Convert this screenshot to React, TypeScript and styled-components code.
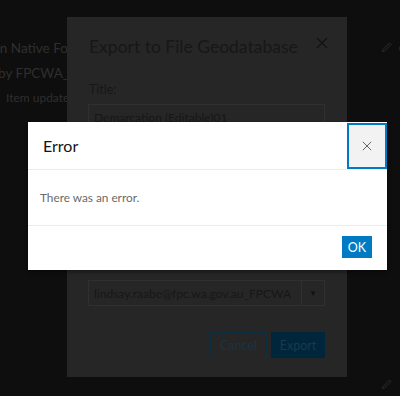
import styled, { createGlobalStyle } from 'styled-components';

const GlobalStyle = createGlobalStyle`
  html, body {
    margin: 0;
    padding: 0;
    background: #0e0e0e;
  }
  body {
    font-family: Lato, "Noto Sans", sans-serif;
  }
`;

const Pencil = ({ size = 12 }: { size?: number }) => (
  <svg width={size} height={size} viewBox="0 0 12 12" fill="none">
    <path d="M1.5 10.5 L2 8.5 L8.5 2 L10 3.5 L3.5 10 Z" stroke="#2c2c2c" strokeWidth="1" />
  </svg>
);

const Cross = ({ size = 12, color }: { size?: number; color: string }) => (
  <svg width={size} height={size} viewBox="0 0 12 12">
    <path d="M1 1 L11 11 M11 1 L1 11" stroke={color} strokeWidth="1.1" />
  </svg>
);

const App = () => {
  return (
    <>
      <GlobalStyle />
      <Page>
        {/* page behind both dialogs */}
        <ItemInfo>
          <InfoLine $indent={0}>Demarcation Native Forest</InfoLine>
          <InfoLine $indent={20}>Owned by FPCWA_GIS</InfoLine>
          <InfoSmall>Item updated</InfoSmall>
        </ItemInfo>
        <SideTools>
          <ToolRow>
            <Pencil />
            <ToolText>edit</ToolText>
          </ToolRow>
          <ToolRow>
            <Pencil />
          </ToolRow>
        </SideTools>

        {/* export dialog, dimmed */}
        <ExportPanel>
          <ExportHeader>
            <ExportTitle>Export to File Geodatabase</ExportTitle>
            <Cross size={12} color="#111" />
          </ExportHeader>
          <FieldLabel>Title:</FieldLabel>
          <TextBox>Demarcation (Editable)01</TextBox>
          <Spacer />
          <SelectBox>
            <SelectText>lindsay.raabe@fpc.wa.gov.au_FPCWA</SelectText>
            <SelectArrow>▼</SelectArrow>
          </SelectBox>
          <ExportFooter>
            <DimButton $primary={false} $w={57}>Cancel</DimButton>
            <DimButton $primary $w={54}>Export</DimButton>
          </ExportFooter>
        </ExportPanel>

        {/* error modal */}
        <ErrorModal>
          <ErrorHeader>
            <ErrorTitle>Error</ErrorTitle>
            <CloseButton>
              <Cross size={10} color="#555" />
            </CloseButton>
          </ErrorHeader>
          <ErrorBody>There was an error.</ErrorBody>
          <ErrorFooter>
            <OkButton>OK</OkButton>
          </ErrorFooter>
        </ErrorModal>
      </Page>
    </>
  );
};

export default App;

const Page = styled.div`
  position: relative;
  width: 400px;
  height: 396px;
  overflow: hidden;
  background: #0e0e0e;
  display: flex;
  justify-content: space-between;
`;

const ItemInfo = styled.div`
  margin-left: -69px;
  padding-top: 38px;
  display: flex;
  flex-direction: column;
  gap: 4px;
  color: #2e2e2e;
`;

const InfoLine = styled.div<{ $indent: number }>`
  font-size: 13.5px;
  line-height: 21px;
  white-space: nowrap;
  margin-left: ${(p) => p.$indent}px;
`;

const InfoSmall = styled.div`
  font-size: 12px;
  line-height: 20px;
  padding-left: 75px;
  white-space: nowrap;
`;

const SideTools = styled.div`
  display: flex;
  flex-direction: column;
  justify-content: space-between;
  padding: 38px 0 6px;
  margin-right: -22px;
`;

const ToolRow = styled.div`
  display: flex;
  align-items: center;
  gap: 5px;
`;

const ToolText = styled.span`
  font-size: 14px;
  color: #2a2a2a;
`;

const ExportPanel = styled.div`
  position: absolute;
  left: 67px;
  top: 17px;
  width: 280px;
  height: 360px;
  background: #262626;
  box-sizing: border-box;
  padding: 0 22px 0 21px;
  display: flex;
  flex-direction: column;
`;

const ExportHeader = styled.div`
  display: flex;
  align-items: center;
  justify-content: space-between;
  height: 58px;
  svg {
    margin-right: -3px;
    margin-top: -6px;
  }
`;

const ExportTitle = styled.div`
  font-size: 17.5px;
  color: #171717;
  padding-left: 1px;
  white-space: nowrap;
`;

const FieldLabel = styled.div`
  font-size: 12.5px;
  color: #171717;
  margin-top: 7px;
  padding-left: 1px;
`;

const TextBox = styled.div`
  margin-top: 7px;
  height: 27px;
  box-sizing: border-box;
  border: 1px solid #303030;
  padding: 0 5px;
  display: flex;
  align-items: center;
  font-size: 12px;
  color: #171717;
`;

const Spacer = styled.div`
  flex: 0 0 149px;
`;

const SelectBox = styled.div`
  height: 26px;
  box-sizing: border-box;
  border: 1px solid #303030;
  display: flex;
  align-items: stretch;
`;

const SelectText = styled.div`
  flex: 1;
  min-width: 0;
  display: flex;
  align-items: center;
  padding-left: 5px;
  font-size: 12px;
  color: #171717;
  white-space: nowrap;
  overflow: hidden;
`;

const SelectArrow = styled.div`
  width: 22px;
  border-left: 1px solid #303030;
  display: flex;
  align-items: center;
  justify-content: center;
  font-size: 8px;
  color: #111;
`;

const ExportFooter = styled.div`
  display: flex;
  justify-content: flex-end;
  gap: 4px;
  margin-top: 26px;
`;

const DimButton = styled.div<{ $primary: boolean; $w: number }>`
  width: ${(p) => p.$w}px;
  height: 26px;
  box-sizing: border-box;
  display: flex;
  align-items: center;
  justify-content: center;
  font-size: 12.5px;
  border: 1px solid ${(p) => (p.$primary ? '#00263b' : '#0d2f42')};
  background: ${(p) => (p.$primary ? '#00263b' : 'transparent')};
  color: ${(p) => (p.$primary ? '#1a3a4c' : '#1b3342')};
`;

const ErrorModal = styled.div`
  position: absolute;
  left: 28px;
  top: 122px;
  width: 359px;
  height: 148px;
  background: #fff;
  display: flex;
  flex-direction: column;
  box-shadow: 0 2px 4px rgba(0, 0, 0, 0.4);
`;

const ErrorHeader = styled.div`
  display: flex;
  align-items: stretch;
  justify-content: space-between;
  height: 47px;
  border-bottom: 1px solid #ececec;
`;

const ErrorTitle = styled.div`
  display: flex;
  align-items: center;
  padding-left: 15px;
  font-size: 16px;
  color: #151515;
`;

const CloseButton = styled.div`
  width: 40px;
  height: 46px;
  margin-top: 1px;
  box-sizing: border-box;
  border: 2px solid #007ac2;
  background: #f2f2f2;
  display: flex;
  align-items: center;
  justify-content: center;
`;

const ErrorBody = styled.div`
  height: 56px;
  box-sizing: border-box;
  border-bottom: 1px solid #ececec;
  display: flex;
  align-items: center;
  padding-left: 12px;
  font-size: 11.8px;
  color: #6a6a6a;
`;

const ErrorFooter = styled.div`
  flex: 1;
  display: flex;
  justify-content: flex-end;
  align-items: flex-start;
  padding: 10px 15px 0 0;
`;

const OkButton = styled.div`
  width: 30px;
  height: 22px;
  background: #007ac2;
  color: #fff;
  font-size: 12.5px;
  display: flex;
  align-items: center;
  justify-content: center;
`;
